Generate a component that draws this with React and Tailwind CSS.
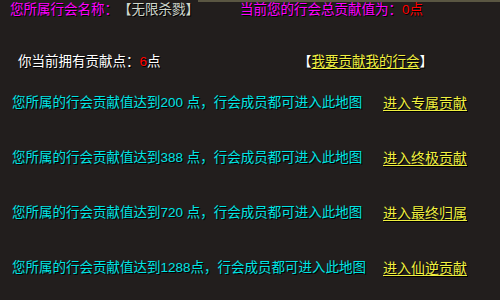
import React from "react";

const font = {
  fontFamily: '"Liberation Sans", "Noto Sans CJK SC", sans-serif',
};

const rows = [
  { pre: "200 ", post: "点，行会成员都可进入此地图", link: "进入专属贡献" },
  { pre: "388 ", post: "点，行会成员都可进入此地图", link: "进入终极贡献" },
  { pre: "720 ", post: "点，行会成员都可进入此地图", link: "进入最终归属" },
  { pre: "1288", post: "点，行会成员都可进入此地图", link: "进入仙逆贡献" },
];

export default function App() {
  return (
    <div
      className="w-[500px] h-[300px] bg-[#221e1d] overflow-hidden flex flex-col leading-4 text-[13.5px] [text-shadow:1px_1px_0_#000]"
      style={font}
    >
      <div className="h-[2px] ml-[198px] bg-[#5a5642] shrink-0" />
      <div className="flex h-4 pl-[10px] whitespace-nowrap">
        <div className="w-[230px] flex">
          <span className="text-[#ff00ff]">您所属行会名称：</span>
          <span className="text-[#cfd6cc]">【无限杀戮】</span>
        </div>
        <div className="flex">
          <span className="text-[#ff00ff]">当前您的行会总贡献值为：</span>
          <span className="text-[#ff0000]">0点</span>
        </div>
      </div>
      <div className="flex h-4 pl-[18px] mt-[36px] whitespace-nowrap">
        <div className="w-[280px] flex">
          <span className="text-white">你当前拥有贡献点：</span>
          <span className="text-[#ff0000]">6</span>
          <span className="text-white">点</span>
        </div>
        <div className="flex text-white">
          <span>【</span>
          <span className="text-[#f0f040] underline underline-offset-2">我要贡献我的行会</span>
          <span>】</span>
        </div>
      </div>
      <div className="flex flex-col gap-[39px] mt-[25px]">
        {rows.map((r) => (
          <div key={r.link} className="flex h-4 pl-[12px] whitespace-nowrap">
            <div className="w-[371px] text-[#00e4e4]">
              您所属的行会贡献值达到{r.pre}
              {r.post}
            </div>
            <span className="text-[#f0f040] text-[14px] underline underline-offset-2">{r.link}</span>
          </div>
        ))}
      </div>
    </div>
  );
}
